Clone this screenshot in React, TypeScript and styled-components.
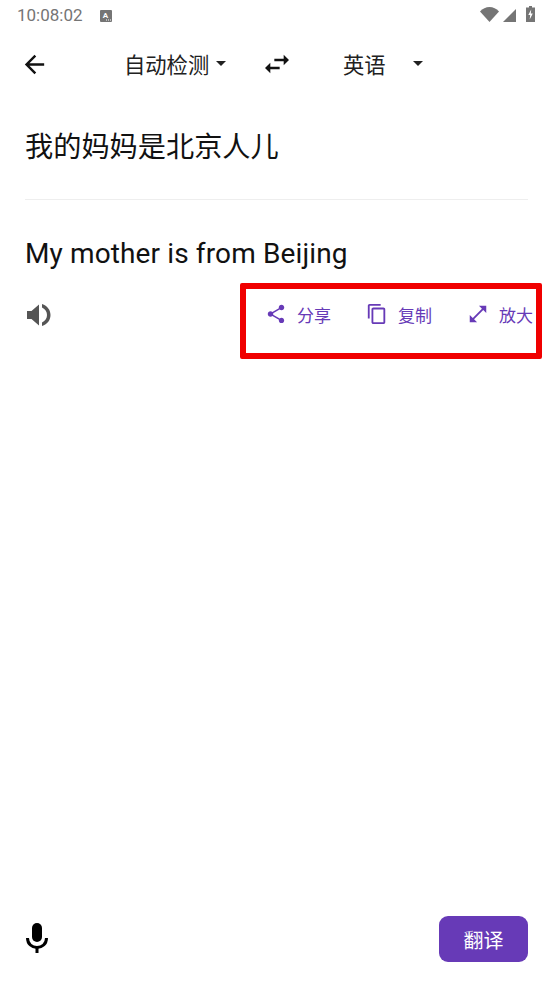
import React from "react"
import styled, { createGlobalStyle } from "styled-components"

const PURPLE = "#673ab7"
const STATUS_GREY = "#757575"

const GlobalStyle = createGlobalStyle`
  html, body {
    margin: 0;
    padding: 0;
    background: #fff;
  }
  body {
    font-family: Roboto, "Noto Sans CJK SC", sans-serif;
  }
`

const Screen = styled.div`
  width: 553px;
  height: 984px;
  display: flex;
  flex-direction: column;
  overflow: hidden;
  background: #fff;
`

const StatusBar = styled.div`
  height: 30px;
  padding: 0 18px 0 17px;
  display: flex;
  align-items: center;
  color: ${STATUS_GREY};
  font-size: 17px;
`

const Badge = styled.svg`
  margin: 2px 0 0 17px;
`

const StatusRight = styled.div`
  margin: 0 0 2px auto;
  display: flex;
  align-items: flex-end;
  gap: 4px;
`

const Battery = styled.svg`
  margin-left: 6px;
`

const Toolbar = styled.div`
  height: 68px;
  padding-left: 20px;
  display: flex;
  align-items: center;
`

const Picker = styled.div<{ $left: number; $width: number }>`
  margin-left: ${(p) => p.$left}px;
  width: ${(p) => p.$width}px;
  padding-bottom: 2px;
  display: flex;
  align-items: center;
  justify-content: space-between;
  font-size: 21.3px;
  color: #212121;
`

const Caret = styled.span`
  width: 0;
  height: 0;
  border-left: 5px solid transparent;
  border-right: 5px solid transparent;
  border-top: 5px solid #212121;
`

const SwapSlot = styled.div`
  margin-left: 35px;
  display: flex;
`

const Source = styled.div`
  margin: 31px 25px 0;
  padding-bottom: 32px;
  border-bottom: 1px solid #eeeeee;
  font-size: 28.2px;
  line-height: 38px;
  color: #111;
`

const Result = styled.div`
  margin: 35px 25px 0;
  font-size: 28px;
  line-height: 38px;
  letter-spacing: 0.125px;
  color: #111;
`

const ActionRow = styled.div`
  margin-top: 10px;
  padding: 0 11px 0 27px;
  display: flex;
  justify-content: space-between;
  align-items: flex-start;
`

const SpeakerSlot = styled.div`
  padding-top: 20px;
  display: flex;
`

const Highlight = styled.div`
  width: 302px;
  height: 76px;
  box-sizing: border-box;
  border: 6px solid #f00000;
  border-radius: 2px;
  padding: 14px 3px 0 19px;
  display: flex;
  justify-content: space-between;
  align-items: flex-start;
`

const Action = styled.div`
  display: flex;
  align-items: center;
  gap: 10px;
  height: 22px;
  color: ${PURPLE};
  font-size: 17px;
`

const Bottom = styled.div`
  margin-top: auto;
  padding: 0 25px 22px 26px;
  display: flex;
  align-items: center;
  justify-content: space-between;
`

const MicSvg = styled.svg`
  margin-bottom: 2px;
`

const TranslateButton = styled.button`
  width: 89px;
  height: 46px;
  border: none;
  border-radius: 9px;
  background: ${PURPLE};
  color: #fff;
  font-family: inherit;
  font-size: 20px;
  padding: 0;
`

const Icon = ({ d, size, color }: { d: string; size: number; color: string }) => (
  <svg width={size} height={size} viewBox="0 0 24 24" fill={color}>
    <path d={d} />
  </svg>
)

const icons = {
  back: "M20 11H7.83l5.59-5.59L12 4l-8 8 8 8 1.41-1.41L7.83 13H20v-2z",
  swap: "M6.99 11L3 15l3.99 4v-3H14v-2H6.99v-3zM21 9l-3.99-4v3H10v2h7.01v3L21 9z",
  share:
    "M18 16.08c-.76 0-1.44.3-1.96.77L8.91 12.7c.05-.23.09-.46.09-.7s-.04-.47-.09-.7l7.05-4.11c.54.5 1.25.81 2.04.81 1.66 0 3-1.34 3-3s-1.34-3-3-3-3 1.34-3 3c0 .24.04.47.09.7L8.04 9.81C7.5 9.31 6.79 9 6 9c-1.66 0-3 1.34-3 3s1.34 3 3 3c.79 0 1.5-.31 2.04-.81l7.12 4.16c-.05.21-.08.43-.08.65 0 1.61 1.31 2.92 2.92 2.92 1.61 0 2.92-1.31 2.92-2.92s-1.31-2.92-2.92-2.92z",
  copy: "M16 1H4c-1.1 0-2 .9-2 2v14h2V3h12V1zm3 4H8c-1.1 0-2 .9-2 2v14c0 1.1.9 2 2 2h11c1.1 0 2-.9 2-2V7c0-1.1-.9-2-2-2zm0 16H8V7h11v14z",
  expand: "M21 11V3h-8l3.29 3.29-10 10L3 13v8h8l-3.29-3.29 10-10z",
}

const KeyboardBadge = () => (
  <Badge width="12" height="12" viewBox="0 0 12 12">
    <rect width="12" height="12" rx="1" fill={STATUS_GREY} />
    <text x="5.5" y="8" fontSize="8" fontWeight="700" textAnchor="middle" fill="#fff" fontFamily="Roboto">
      A
    </text>
    <path d="M6 9.5h1v1H6zM8 9.5h1v1H8zM10 9.5h1v1h-1z" fill="#fff" />
  </Badge>
)

const StatusIcons = () => (
  <StatusRight>
    <svg width="19" height="15" viewBox="0 0 19 15">
      <path d="M0 4.5C2.6 1.6 5.9 0 9.5 0S16.4 1.6 19 4.5L9.5 15z" fill={STATUS_GREY} />
    </svg>
    <svg width="13" height="13" viewBox="0 0 13 13">
      <path d="M0 13L13 0v13z" fill={STATUS_GREY} />
    </svg>
    <Battery width="9" height="16" viewBox="0 0 9 16">
      <path d="M3 0h3v1.5h3V16H0V1.5h3z" fill={STATUS_GREY} />
      <path d="M5.2 3.5L2.3 9H4.2L3.7 13.5 6.8 7.5H4.8z" fill="#fff" />
    </Battery>
  </StatusRight>
)

const SpeakerIcon = () => (
  <svg width="24" height="24" viewBox="0 0 24 24" fill="#555">
    <path d="M0 8h4.5L12 1.5v21L4.5 16H0z" />
    <path d="M15 1c5.500 2 8.500 6 8.500 11s-3 9-8.500 11v-3.500c3.500-1.500 5-4.500 5-7.500s-1.500-6-5-7.500z" />
  </svg>
)

const MicIcon = () => (
  <MicSvg width="22" height="30" viewBox="0 0 22 30">
    <rect x="6" y="0" width="10" height="19" rx="5" fill="#000" />
    <path d="M1.500 15c0 6 4.500 9.500 9.500 9.500s9.500-3.500 9.500-9.500" fill="none" stroke="#000" strokeWidth="3" />
    <rect x="9.500" y="24" width="3" height="6" fill="#000" />
  </MicSvg>
)

export default function App() {
  return (
    <>
      <GlobalStyle />
      <Screen>
        <StatusBar>
          10:08:02
          <KeyboardBadge />
          <StatusIcons />
        </StatusBar>
        <Toolbar>
          <Icon d={icons.back} size={29} color="#111" />
          <Picker $left={75} $width={102}>
            自动检测
            <Caret />
          </Picker>
          <SwapSlot>
            <Icon d={icons.swap} size={32} color="#111" />
          </SwapSlot>
          <Picker $left={50} $width={80}>
            英语
            <Caret />
          </Picker>
        </Toolbar>
        <Source>我的妈妈是北京人儿</Source>
        <Result>My mother is from Beijing</Result>
        <ActionRow>
          <SpeakerSlot>
            <SpeakerIcon />
          </SpeakerSlot>
          <Highlight>
            <Action>
              <Icon d={icons.share} size={22} color={PURPLE} />
              分享
            </Action>
            <Action>
              <Icon d={icons.copy} size={22} color={PURPLE} />
              复制
            </Action>
            <Action>
              <Icon d={icons.expand} size={22} color={PURPLE} />
              放大
            </Action>
          </Highlight>
        </ActionRow>
        <Bottom>
          <MicIcon />
          <TranslateButton>翻译</TranslateButton>
        </Bottom>
      </Screen>
    </>
  )
}
